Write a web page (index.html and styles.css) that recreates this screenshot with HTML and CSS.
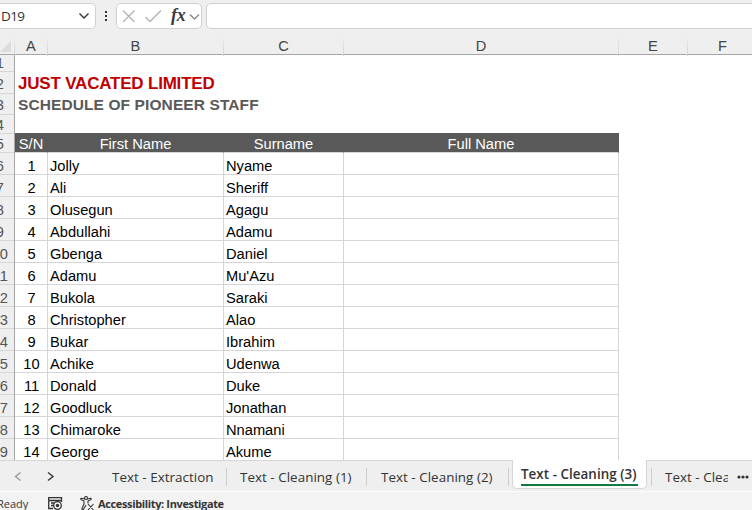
FILE: index.html
```
<!DOCTYPE html>
<html lang="en">
<head>
<meta charset="utf-8">
<title>Workbook</title>
<link rel="stylesheet" href="styles.css">
</head>
<body>
<div class="app">
  <div class="formula-bar">
    <div class="name-box"><span>D19</span><svg width="12" height="8" viewBox="0 0 12 8"><path d="M1.500 1.500 6 6l4.500-4.500"/></svg></div>
    <svg class="dots" width="4" height="12" viewBox="0 0 4 12"><path d="M1 1h2v2H1zM1 5h2v2H1zM1 9h2v2H1z"/></svg>
    <div class="fx-box">
      <svg width="84" height="25" viewBox="0 0 84 25"><path class="pale" d="M6 6.500 17.500 18M17.500 6.500 6 18M28.500 13l4.500 4.500L44 6.500"/><path class="mid" d="m73 10.500 4.500 4.500 4.500-4.500"/></svg>
      <span class="fx">fx</span>
    </div>
    <div class="input"></div>
  </div>
  <div class="cols">
    <div class="corner"><svg width="11" height="11" viewBox="0 0 11 11"><path d="M11 0v11H0z"/></svg></div>
    <div>A</div><div>B</div><div>C</div><div>D</div><div>E</div><div>F</div>
  </div>
  <div class="sheet">
    <div class="rownums">
      <div class="one r1"><span>1</span></div><div class="one r2"><span>2</span></div><div class="one r3"><span>3</span></div><div class="one r4"><span>4</span></div><div class="one r5"><span>5</span></div>
      <div class="one"><span>6</span></div><div class="one"><span>7</span></div><div class="one"><span>8</span></div><div class="one"><span>9</span></div>
      <div><span>10</span></div><div><span>11</span></div><div><span>12</span></div><div><span>13</span></div><div><span>14</span></div>
      <div><span>15</span></div><div><span>16</span></div><div><span>17</span></div><div><span>18</span></div><div><span>19</span></div>
    </div>
    <div class="cells">
      <div class="title"><span>JUST VACATED LIMITED</span></div>
      <div class="subtitle"><span>SCHEDULE OF PIONEER STAFF</span></div>
      <div class="row head"><div>S/N</div><div>First Name</div><div>Surname</div><div>Full Name</div></div>
      <div class="row"><div>1</div><div>Jolly</div><div>Nyame</div><div></div></div>
      <div class="row"><div>2</div><div>Ali</div><div>Sheriff</div><div></div></div>
      <div class="row"><div>3</div><div>Olusegun</div><div>Agagu</div><div></div></div>
      <div class="row"><div>4</div><div>Abdullahi</div><div>Adamu</div><div></div></div>
      <div class="row"><div>5</div><div>Gbenga</div><div>Daniel</div><div></div></div>
      <div class="row"><div>6</div><div>Adamu</div><div>Mu'Azu</div><div></div></div>
      <div class="row"><div>7</div><div>Bukola</div><div>Saraki</div><div></div></div>
      <div class="row"><div>8</div><div>Christopher</div><div>Alao</div><div></div></div>
      <div class="row"><div>9</div><div>Bukar</div><div>Ibrahim</div><div></div></div>
      <div class="row"><div>10</div><div>Achike</div><div>Udenwa</div><div></div></div>
      <div class="row"><div>11</div><div>Donald</div><div>Duke</div><div></div></div>
      <div class="row"><div>12</div><div>Goodluck</div><div>Jonathan</div><div></div></div>
      <div class="row"><div>13</div><div>Chimaroke</div><div>Nnamani</div><div></div></div>
      <div class="row"><div>14</div><div>George</div><div>Akume</div><div></div></div>
    </div>
  </div>
  <div class="tabs">
    <svg class="nav" width="86" height="31" viewBox="0 0 86 31"><path class="prev" d="m20.500 11.500-5 4 5 4"/><path class="next" d="m48 11.500 5 4-5 4"/></svg>
    <div class="tab t0"><span>Text - Extraction</span></div>
    <div class="tab t1"><span>Text - Cleaning (1)</span></div>
    <div class="tab t2"><span>Text - Cleaning (2)</span></div>
    <div class="active"><span>Text - Cleaning (3)</span></div>
    <div class="tab last"><span>Text - Cleaning (4)</span></div>
    <svg class="more" width="12" height="4" viewBox="0 0 12 4"><circle cx="2" cy="2" r="1.600"/><circle cx="6" cy="2" r="1.600"/><circle cx="10" cy="2" r="1.600"/></svg>
  </div>
  <div class="status">
    <span class="ready">Ready</span>
    <svg class="macro" width="15" height="14" viewBox="0 0 15 14"><path d="M13.500 5V.7H.7v10.800H5M.7 3.500h12.800M3 6h3M3 8.500h2"/><circle cx="9.500" cy="8.500" r="3.800"/><circle class="solid" cx="9.500" cy="8.500" r="1.700"/></svg>
    <svg class="access" width="15" height="15" viewBox="0 0 15 15"><circle cx="6" cy="2" r="1.500"/><path d="M5 3 1.500 2.200C.5 2.200.5 3.500 1.300 3.800L4 5v3l-2 4.500c-.3 1.100.9 1.600 1.500.7L6 9M7 3l3.500-.8c1 0 1 1.300.2 1.600L8 5v2.500M8 8l5.500 6M13.500 8 8 14"/></svg>
    <b>Accessibility: Investigate</b>
  </div>
</div>
</body>
</html>
```
FILE: styles.css
```
* { box-sizing: border-box; }
body { margin: 0; overflow: hidden; }
.app {
  width: 752px; height: 510px; overflow: hidden; background: #efefef;
  font-family: "Liberation Sans", Arial, sans-serif; font-size: 14.67px; color: #000;
}
svg { flex: none; fill: none; stroke: #333; stroke-width: 1.4; }

.formula-bar { display: flex; height: 36px; padding-top: 3px; }
.name-box, .fx-box, .input { flex: none; height: 26px; background: #fff; border: 1px solid #d1d1d1; border-radius: 5px; }
.name-box {
  width: 96px; border-left: 0; border-radius: 0 5px 5px 0; display: flex; align-items: center;
  justify-content: space-between; padding: 0 5px 0 1px;
  font-family: "Open Sans", sans-serif; font-size: 13.5px; letter-spacing: -.6px; color: #333;
}
.dots { margin: 7px 8px 0 8px; fill: #333; stroke: none; }
.fx-box { width: 86px; position: relative; }
.pale { stroke: #b5b5b5; }
.mid { stroke: #8a8a8a; }
.fx {
  position: absolute; left: 54px; top: 0; font: italic bold 18px/22px "Liberation Serif", serif;
  color: #3a3a3a; letter-spacing: -.3px;
}
.input { margin-left: 4px; width: 560px; }

.cols { display: grid; grid-template-columns: 15px 33px 176px 120px 275px 69px 70px; height: 19px; border-bottom: 1px solid #a6a6a6; color: #444; }
.cols > div {
  text-align: center; line-height: 20px; border-right: 1px solid;
  border-image: linear-gradient(#efefef, #cfcfcf) 1;
}
.cols > .corner { display: flex; align-items: flex-end; padding-bottom: 4px; }
.corner svg { fill: #dcdcdc; stroke: none; }

.sheet { display: flex; height: 406px; background: #fff; }
.rownums { width: 15px; flex: none; background: #efefef; border-right: 1px solid #a6a6a6; color: #555; overflow: hidden; }
.rownums div { height: 22px; border-bottom: 1px solid #d6d6d6; display: flex; justify-content: flex-end; padding-right: 6px; line-height: 26px; }
.rownums .one { padding: 0; }
.one span { margin-right: 10px; }
.rownums .r1 { height: 17px; line-height: 17px; }
.rownums .r2 { height: 22px; line-height: 24px; }
.rownums .r3 { height: 21px; line-height: 22px; }
.rownums .r4 { height: 19px; line-height: 21px; }
.rownums .r5 { height: 19px; line-height: 21px; }
.cells { width: 604px; }
.title, .subtitle { padding-left: 3px; font-weight: bold; white-space: nowrap; }
.title { height: 39px; padding-top: 17px; line-height: 23px; font-size: 17px; color: #c00000; letter-spacing: -.2px; }
.subtitle { height: 39px; line-height: 22px; font-size: 15.5px; color: #595959; letter-spacing: .1px; }
.row { display: grid; grid-template-columns: 33px 176px 120px 275px; height: 22px; line-height: 26px; }
.row > div { border-right: 1px solid #d6d6d6; border-bottom: 1px solid #d6d6d6; padding-left: 2px; height: 22px; }
.row > div:first-child { text-align: center; padding-left: 1px; }
.row.head { height: 20px; line-height: 22px; background: #595959; color: #fff; }
.row.head > div { text-align: center; height: 20px; padding: 0; border-right-color: #595959; }

.tabs {
  display: flex; height: 32px; border-bottom: 1px solid #fff; border-top: 1px solid #d6d6d6;
  margin-top: -1px; font-family: "Open Sans", sans-serif; font-size: 13.4px; letter-spacing: .04px;
  color: #333; white-space: nowrap; position: relative;
}
.nav .prev { stroke: #999; }
.tab { position: relative; height: 18px; margin-top: 7px; line-height: 18px; border-right: 1px solid #cdcdcd; flex: none; }
.t0 { width: 141px; padding-left: 26px; }
.t1 { width: 140px; padding-left: 13px; }
.t2 { width: 142px; padding-left: 14px; }
.active {
  flex: none; width: 135px; height: 29px; margin: -1px 0 0 3px; padding: 5px 8px 0; background: #fff;
  border: 1px solid #d6d6d6; border-top: 0; border-radius: 0 0 5px 5px; font-weight: 600;
}
.active span { display: block; height: 21px; line-height: 18px; border-bottom: 2px solid #107c41; }
.last { width: 77px; margin-left: 4px; padding-left: 13px; overflow: hidden; border-right: 0; border-left: 1px solid #cdcdcd; }
.more { margin: 14px 0 0 9px; fill: #333; stroke: none; }

.status { display: flex; height: 18px; background: #f3f3f3; font-family: "Open Sans", sans-serif; font-size: 11px; line-height: 23px; color: #333; white-space: nowrap; overflow: hidden; }
.ready { width: 48px; text-indent: -3px; }
.macro { margin: 5px 17px 0 0; stroke-width: 1.300; }
.solid { fill: #333; stroke: none; }
.access { margin: 4px 3px 0 0; stroke-width: 1.100; }
.status b { font-weight: 700; letter-spacing: -.36px; }
```
